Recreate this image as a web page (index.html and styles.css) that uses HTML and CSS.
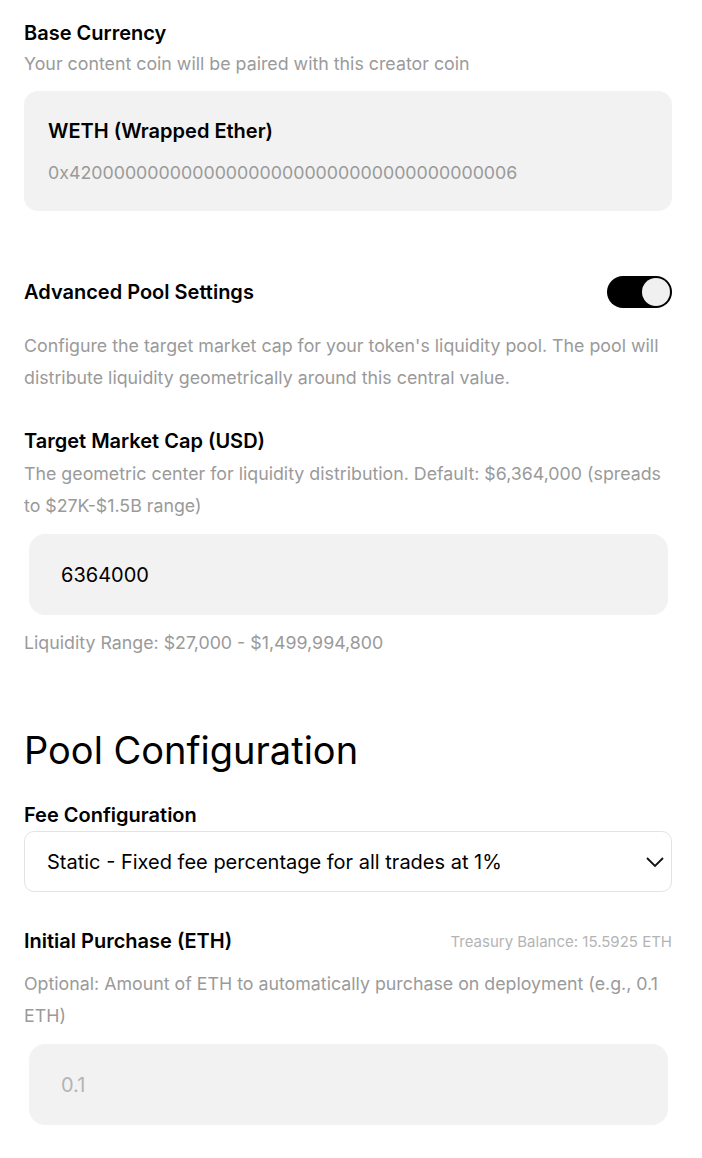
FILE: index.html
```html
<!DOCTYPE html>
<html lang="en">
<head>
  <meta charset="utf-8">
  <title>Pool Configuration</title>
  <link rel="stylesheet" href="styles.css">
</head>
<body>
<div id="root">

  <div class="field">
    <div class="label">Base Currency</div>
    <div class="hint">Your content coin will be paired with this creator coin</div>
    <div class="coinbox">
      <div class="coinname">WETH (Wrapped Ether)</div>
      <div class="coinaddr">0x4200000000000000000000000000000000000006</div>
    </div>
  </div>

  <div class="toggle-row">
    <span class="label">Advanced Pool Settings</span>
    <span class="toggle"><span class="knob"></span></span>
  </div>
  <p class="para">Configure the target market cap for your token's liquidity pool. The pool will distribute liquidity geometrically around this central value.</p>

  <div class="field cap">
    <div class="label">Target Market Cap (USD)</div>
    <div class="hint tall">The geometric center for liquidity distribution. Default: $6,364,000 (spreads to $27K-$1.5B range)</div>
    <div class="input">6364000</div>
    <div class="hint range">Liquidity Range: $27,000 - $1,499,994,800</div>
  </div>

  <h2 class="section">Pool Configuration</h2>

  <div class="field">
    <div class="label">Fee Configuration</div>
    <div class="select">
      <span>Static - Fixed fee percentage for all trades at 1%</span>
      <svg width="20" height="20" viewBox="0 0 20 20"><path d="M2 6l8 8 8-8" fill="none" stroke="#111" stroke-width="1.8"/></svg>
    </div>
  </div>

  <div class="field purchase">
    <div class="label-row">
      <span class="label">Initial Purchase (ETH)</span>
      <span class="balance">Treasury Balance: 15.5925 ETH</span>
    </div>
    <div class="hint tall">Optional: Amount of ETH to automatically purchase on deployment (e.g., 0.1 ETH)</div>
    <div class="input placeholder">0.1</div>
  </div>

</div>
</body>
</html>
```

FILE: styles.css
```css
body {
  margin: 0;
  background-color: #ffffff;
  font-family: Inter, "Liberation Sans", sans-serif;
  color: #000000;
}

#root {
  padding: 19px 30px 40px 24px;
}

.label {
  font-size: 20px;
  font-weight: 600;
  line-height: 28px;
}
.hint {
  font-size: 17.8px;
  color: #9a9a9a;
  line-height: 28px;
  margin-top: 3px;
}
.hint.tall {
  line-height: 32px;
  margin-top: 3px;
}

.coinbox {
  margin-top: 13px;
  height: 120px;
  box-sizing: border-box;
  padding: 26px 24px 0 24px;
  background-color: #f2f2f2;
  border-radius: 14px;
}
.coinname {
  font-size: 20px;
  font-weight: 600;
  line-height: 28px;
}
.coinaddr {
  margin-top: 14px;
  font-size: 17.8px;
  color: #9a9a9a;
  line-height: 28px;
}

.toggle-row {
  margin-top: 65px;
  display: flex;
  justify-content: space-between;
  align-items: center;
}
.toggle {
  display: flex;
  justify-content: flex-end;
  align-items: center;
  width: 65px;
  height: 32px;
  box-sizing: border-box;
  padding: 2px;
  border-radius: 16px;
  background-color: #000000;
}
.knob {
  width: 28px;
  height: 28px;
  box-sizing: border-box;
  border-radius: 50%;
  background-color: #f0f0f0;
}

.para {
  margin: 22px 0 0 0;
  font-size: 17.8px;
  color: #9a9a9a;
  line-height: 32px;
}

.cap {
  margin-top: 33px;
}
.input {
  margin: 12px 4px 0 5px;
  height: 81px;
  box-sizing: border-box;
  padding: 0 32px;
  display: flex;
  align-items: center;
  background-color: #f2f2f2;
  border-radius: 16px;
  font-size: 20px;
}
.input.placeholder {
  color: #b4b4b4;
}
.hint.range {
  margin-top: 14px;
}

.section {
  margin: 71px 0 29px 0;
  font-size: 38px;
  font-weight: 400;
  line-height: 44px;
}

.select {
  margin-top: 2px;
  height: 61px;
  box-sizing: border-box;
  padding: 0 6px 0 22px;
  display: flex;
  justify-content: space-between;
  align-items: center;
  border: 1px solid #e3e3e3;
  border-radius: 10px;
  font-size: 20px;
}

.purchase {
  margin-top: 35px;
}
.label-row {
  display: flex;
  justify-content: space-between;
  align-items: center;
}
.balance {
  font-size: 15px;
  color: #b4b4b4;
}
.purchase .hint.tall {
  margin-top: 13px;
}
```
